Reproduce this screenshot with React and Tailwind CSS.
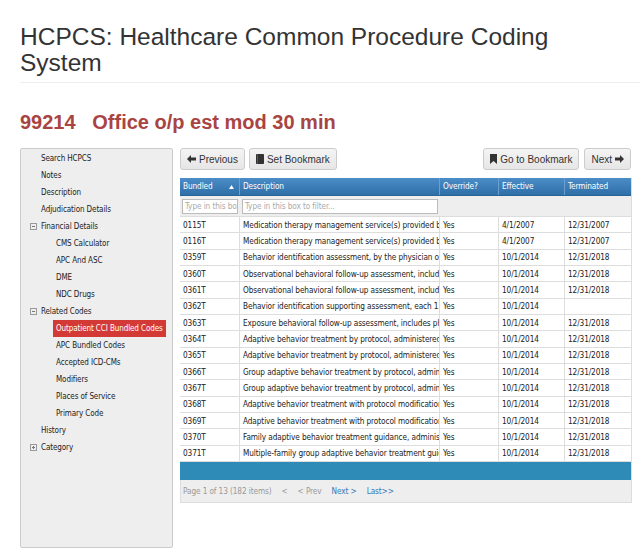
import React from "react";

const rows = [
  ["0115T", "Medication therapy management service(s) provided by a pharmacist", "Yes", "4/1/2007", "12/31/2007"],
  ["0116T", "Medication therapy management service(s) provided by a pharmacist", "Yes", "4/1/2007", "12/31/2007"],
  ["0359T", "Behavior identification assessment, by the physician or other", "Yes", "10/1/2014", "12/31/2018"],
  ["0360T", "Observational behavioral follow-up assessment, includes physician", "Yes", "10/1/2014", "12/31/2018"],
  ["0361T", "Observational behavioral follow-up assessment, includes physician", "Yes", "10/1/2014", "12/31/2018"],
  ["0362T", "Behavior identification supporting assessment, each 15 minutes", "Yes", "10/1/2014", ""],
  ["0363T", "Exposure behavioral follow-up assessment, includes physician", "Yes", "10/1/2014", "12/31/2018"],
  ["0364T", "Adaptive behavior treatment by protocol, administered by technician", "Yes", "10/1/2014", "12/31/2018"],
  ["0365T", "Adaptive behavior treatment by protocol, administered by technician", "Yes", "10/1/2014", "12/31/2018"],
  ["0366T", "Group adaptive behavior treatment by protocol, administered", "Yes", "10/1/2014", "12/31/2018"],
  ["0367T", "Group adaptive behavior treatment by protocol, administered", "Yes", "10/1/2014", "12/31/2018"],
  ["0368T", "Adaptive behavior treatment with protocol modification administered", "Yes", "10/1/2014", "12/31/2018"],
  ["0369T", "Adaptive behavior treatment with protocol modification administered", "Yes", "10/1/2014", "12/31/2018"],
  ["0370T", "Family adaptive behavior treatment guidance, administered by", "Yes", "10/1/2014", "12/31/2018"],
  ["0371T", "Multiple-family group adaptive behavior treatment guidance", "Yes", "10/1/2014", "12/31/2018"],
];

const nav = [
  { label: "Search HCPCS", level: 0 },
  { label: "Notes", level: 0 },
  { label: "Description", level: 0 },
  { label: "Adjudication Details", level: 0 },
  { label: "Financial Details", level: 0, toggle: "minus" },
  { label: "CMS Calculator", level: 1 },
  { label: "APC And ASC", level: 1 },
  { label: "DME", level: 1 },
  { label: "NDC Drugs", level: 1 },
  { label: "Related Codes", level: 0, toggle: "minus" },
  { label: "Outpatient CCI Bundled Codes", level: 1, active: true },
  { label: "APC Bundled Codes", level: 1 },
  { label: "Accepted ICD-CMs", level: 1 },
  { label: "Modifiers", level: 1 },
  { label: "Places of Service", level: 1 },
  { label: "Primary Code", level: 1 },
  { label: "History", level: 0 },
  { label: "Category", level: 0, toggle: "plus" },
];

const verdana = { fontFamily: '"DejaVu Sans Condensed", "DejaVu Sans", sans-serif' };

function Toggle({ kind }) {
  return (
    <span className="absolute left-[9px] top-[5px] w-[7px] h-[7px] border border-[#999] flex items-center justify-center">
      <span className="absolute w-[3px] h-px bg-[#777]" />
      {kind === "plus" && <span className="absolute w-px h-[3px] bg-[#777]" />}
    </span>
  );
}

function ArrowLeft() {
  return (
    <svg width="9" height="8" viewBox="0 0 9 8" className="mr-[3px]">
      <path d="M0 4 L4 0 L4 2.5 L9 2.5 L9 5.5 L4 5.5 L4 8 Z" fill="#333" />
    </svg>
  );
}

function ArrowRight() {
  return (
    <svg width="9" height="8" viewBox="0 0 9 8" className="ml-[3px]">
      <path d="M9 4 L5 0 L5 2.5 L0 2.5 L0 5.5 L5 5.5 L5 8 Z" fill="#333" />
    </svg>
  );
}

function BookIcon() {
  return (
    <svg width="8" height="10" viewBox="0 0 8 10" className="mr-[3px]">
      <rect x="0" y="0" width="8" height="10" rx="0.8" fill="#333" />
      <rect x="1" y="0.5" width="0.6" height="9" fill="#777" />
    </svg>
  );
}

function BookmarkIcon() {
  return (
    <svg width="7" height="10" viewBox="0 0 7 10" className="mr-[3px]">
      <path d="M0 0 H7 V10 L3.5 7 L0 10 Z" fill="#333" />
    </svg>
  );
}

function Btn({ children }) {
  return (
    <button className="h-[22px] px-[6px] flex items-center text-[10px] text-[#333] bg-gradient-to-b from-[#f4f4f4] to-[#e6e6e6] border border-[#ccc] rounded-[3px]">
      {children}
    </button>
  );
}

export default function App() {
  return (
    <div className="w-[640px] h-[556px] overflow-hidden bg-white pl-5" style={{ fontFamily: '"Liberation Sans", Arial, sans-serif' }}>
      <h1 className="pt-[24px] text-[24.5px] leading-[26px] text-[#333] pr-[80px]">
        HCPCS: Healthcare Common Procedure Coding System
      </h1>
      <div className="mt-[6px] h-px bg-[#eee]" />
      <h2 className="mt-[26px] text-[20px] leading-[26px] font-bold text-[#a94442] whitespace-pre">
        {"99214   Office o/p est mod 30 min"}
      </h2>

      <div className="mt-[13px] flex gap-[7px]">
        {/* Sidebar */}
        <div className="w-[153px] h-[400px] shrink-0 bg-[#eee] border border-[#ccc] rounded-[2px] pt-[1px] text-[8px] tracking-[-0.1px] text-[#222]" style={verdana}>
          {nav.map((n) => (
            <div key={n.label} className="relative h-[17px] flex items-center whitespace-nowrap">
              {n.toggle && <Toggle kind={n.toggle} />}
              {n.active ? (
                <span className="ml-[32px] h-[17px] px-[3px] w-[113px] flex items-center bg-[#d43a35] text-white">{n.label}</span>
              ) : (
                <span className={n.level ? "ml-[35px]" : "ml-[20px]"}>{n.label}</span>
              )}
            </div>
          ))}
        </div>

        {/* Content */}
        <div className="w-[452px]">
          <div className="flex justify-between">
            <div className="flex gap-[4px]">
              <Btn><ArrowLeft />Previous</Btn>
              <Btn><BookIcon />Set Bookmark</Btn>
            </div>
            <div className="flex gap-[5px] mr-[1px]">
              <Btn><BookmarkIcon />Go to Bookmark</Btn>
              <Btn>Next<ArrowRight /></Btn>
            </div>
          </div>

          <div className="mt-[8px] border-r border-[#ddd] text-[8.2px] tracking-[-0.1px]" style={verdana}>
            <div className="grid grid-cols-[60px_200px_59px_66px_67px] h-[18px] bg-gradient-to-b from-[#4b8dc8] to-[#2f6fa8] text-white border-b border-[#2a6496]">
              <div className="flex items-center justify-between px-[3px] border-r border-[#6a9fcf]">
                <span>Bundled</span>
                <svg width="5" height="4" viewBox="0 0 5 4" className="mr-[2px]"><path d="M2.5 0 L5 4 L0 4 Z" fill="#fff" /></svg>
              </div>
              <div className="flex items-center px-[3px] border-r border-[#6a9fcf]">Description</div>
              <div className="flex items-center px-[3px] border-r border-[#6a9fcf]">Override?</div>
              <div className="flex items-center px-[3px] border-r border-[#6a9fcf]">Effective</div>
              <div className="flex items-center px-[3px]">Terminated</div>
            </div>
            <div className="grid grid-cols-[60px_200px_59px_66px_67px] h-[21px] bg-[#eee] items-center border-b border-[#ddd]">
              <div className="px-[2px]">
                <div className="h-[15px] bg-white border border-[#bbb] text-[#aaa] px-[2px] flex items-center overflow-hidden whitespace-nowrap">Type in this box</div>
              </div>
              <div className="px-[2px]">
                <div className="h-[15px] bg-white border border-[#bbb] text-[#aaa] px-[2px] flex items-center whitespace-nowrap">Type in this box to filter...</div>
              </div>
              <div />
              <div />
              <div />
            </div>
            {rows.map((r) => (
              <div key={r[0]} className="grid grid-cols-[60px_200px_59px_66px_67px] h-[16.35px] border-b border-[#ddd] text-[#222]">
                {r.map((c, i) => (
                  <div key={i} className={"flex items-center px-[3px] overflow-hidden whitespace-nowrap " + (i < 4 ? "border-r border-[#ddd]" : "")}>
                    {c}
                  </div>
                ))}
              </div>
            ))}
            <div className="h-[18px] bg-[#2e8bb8]" />
            <div className="h-[23px] bg-[#eee] border-b border-l border-[#ddd] flex items-center px-[2px] gap-[10px] text-[#999]">
              <span>Page 1 of 13 (182 items)</span>
              <span>&lt;</span>
              <span>&lt; Prev</span>
              <span className="text-[#337ab7]">Next &gt;</span>
              <span className="text-[#337ab7]">Last&gt;&gt;</span>
            </div>
          </div>
        </div>
      </div>
    </div>
  );
}
